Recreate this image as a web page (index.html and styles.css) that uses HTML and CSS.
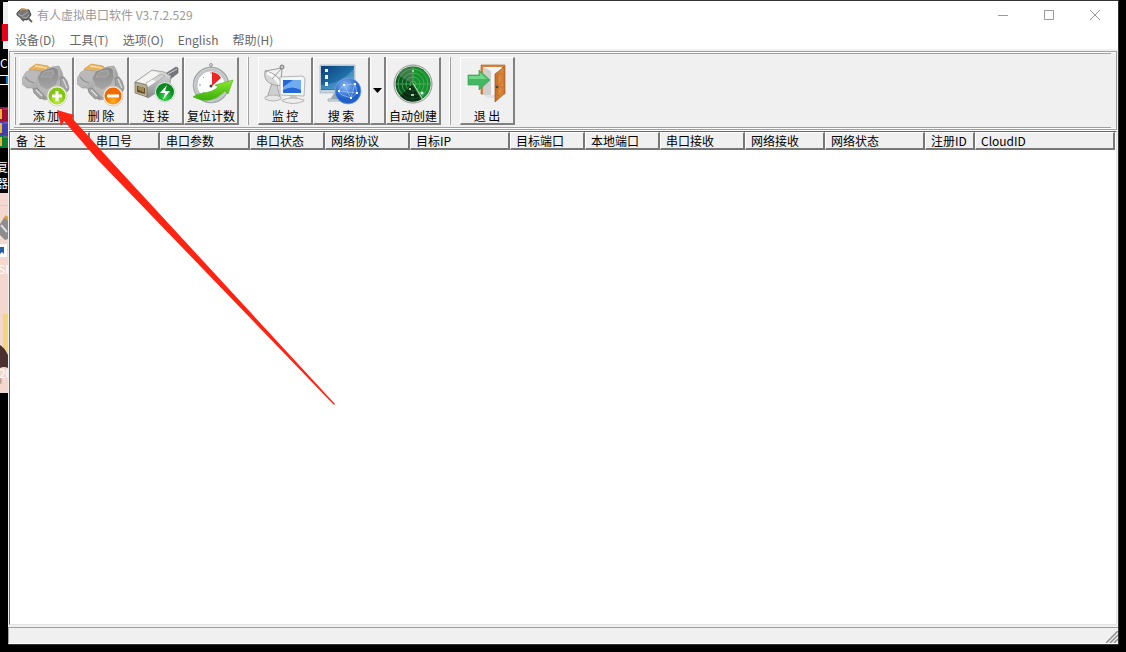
FILE: index.html
```html
<!DOCTYPE html>
<html lang="zh-CN">
<head>
<meta charset="utf-8">
<title>有人虚拟串口软件 V3.7.2.529</title>
<link rel="stylesheet" href="styles.css">
</head>
<body>
<svg class="defs" aria-hidden="true">
  <defs>
    <linearGradient id="metal" x1="0" y1="0" x2="1" y2="1"><stop offset="0" stop-color="#c4c4c4"/><stop offset=".5" stop-color="#adadad"/><stop offset="1" stop-color="#8e8e8e"/></linearGradient>
    <linearGradient id="hood" x1="0" y1="0" x2="0" y2="1"><stop offset="0" stop-color="#868686"/><stop offset="1" stop-color="#a8a8a8"/></linearGradient>
    <linearGradient id="plug" x1="0" y1="0" x2="0" y2="1"><stop offset="0" stop-color="#e4e4e2"/><stop offset="1" stop-color="#85878a"/></linearGradient>
    <linearGradient id="leaf" x1="0" y1="0" x2="0" y2="1"><stop offset="0" stop-color="#8bea2d"/><stop offset="1" stop-color="#39ad0b"/></linearGradient>
    <linearGradient id="screen" x1="0" y1="0" x2="1" y2="1"><stop offset="0" stop-color="#0c3f78"/><stop offset=".6" stop-color="#2173ae"/><stop offset="1" stop-color="#6fc0df"/></linearGradient>
    <linearGradient id="wood" x1="0" y1="0" x2="1" y2="0"><stop offset="0" stop-color="#c96c22"/><stop offset="1" stop-color="#e58f43"/></linearGradient>
    <radialGradient id="lime" cx=".5" cy=".8"><stop offset="0" stop-color="#c4ee3a"/><stop offset="1" stop-color="#84c414"/></radialGradient>
    <radialGradient id="orange" cx=".5" cy=".8"><stop offset="0" stop-color="#ffb020"/><stop offset="1" stop-color="#f06a00"/></radialGradient>
    <radialGradient id="green" cx=".5" cy=".8"><stop offset="0" stop-color="#35dc4a"/><stop offset="1" stop-color="#078a20"/></radialGradient>
    <radialGradient id="globe" cx=".4" cy=".3"><stop offset="0" stop-color="#8dbcf2"/><stop offset="1" stop-color="#2160c8"/></radialGradient>
    <symbol id="serial" viewBox="0 0 48 40">
      <path d="M7 8 14 3l12 2 3 3-8 3-13 1z" fill="#eeb052" stroke="#cc9348" stroke-width=".6"/>
      <path d="m13 5 12 2" stroke="#ffe0a6" stroke-width="1.500"/>
      <path d="M1 16 4 11l5-2 12 1 9-4 7-1 3 6 2 8 2 5-7 8-9 6-6 1-5-4-7-8-5 0-6-5z" fill="url(#metal)" stroke="#9a9a9a" stroke-width=".6"/>
      <path d="m3 14 5-3 9 1-4 10-5 3-5-3z" fill="#b9b9b9"/>
      <path d="m3 16 4 4 5 2" stroke="#8e8e8e" stroke-width="1.200" fill="none"/>
      <path d="m15 17 4-7 12-4 5 2 1 9-3 7-9 5-7-4z" fill="url(#hood)" stroke="#bebebe" stroke-width=".7"/>
      <path d="m19 16 3-5 9-2 1 4-3 3z" fill="#9b9b9b" stroke="#bbb" stroke-width=".6"/>
      <path d="m16 24 9 5 9-5 4-6 1 7-6 7-8 4-6-4z" fill="#b8b8b8"/>
      <path d="m38 17 4-1 3 4 2 7-1 3-4 1-3-5z" fill="#a2a2a2" stroke="#808080" stroke-width=".6"/>
      <path d="m41 18 4 9" stroke="#dedede" stroke-width="1.200"/>
      <path d="m11 28 4-1 7 7v3l-4 1-6-6z" fill="#a2a2a2" stroke="#808080" stroke-width=".6"/>
      <path d="m14 29 6 6" stroke="#dedede" stroke-width="1.200"/>
    </symbol>
  </defs>
</svg>
<div class="screen">
  <svg class="desktop" width="8" height="652" viewBox="0 0 8 652" aria-hidden="true">
    <path d="M3 2h5v47H3z" fill="#eee"/><path d="M2 24h6v17H2z" fill="#e90019"/>
    <text x="0" y="68" class="desk-text">C</text>
    <path d="M0 75.500h8M0 84.500h8" stroke="#fff"/><path d="M6 76h2v8H6z" fill="#0878d8"/>
    <path d="M0 107h8v14H0z" fill="#a01035"/><path d="M0 121h8v14H0z" fill="#4040ae"/><path d="M0 135h8v13H0z" fill="#107b35"/>
    <path d="M0 109h2v10H0zm0 14h2v10H0zm0 14h2v9H0z" fill="#e7b735"/><path d="M3 109h5M3 123h5M3 137h5" stroke="#e28aaf" stroke-opacity=".5"/>
    <text x="-4" y="172" class="desk-text">复</text><text x="-4" y="188" class="desk-text">器</text>
    <path d="M0 193h8v200H0z" fill="#f4d8cf"/><path d="M0 205.500h8" stroke="#e8c8bf"/>
    <path d="m3 219 3-4 2 2v5H3z" fill="#e69b28"/><path d="m0 224 4-6 4 3v18l-3 1-5-5z" fill="#8d8d8d"/><path d="m1 225 6 7" stroke="#ddd" stroke-width="2"/>
    <path d="M0 244h7v13H0z" fill="#fff"/><path d="M0 247h4v7l-2-2-2 2z" fill="#2861a3"/>
    <text x="-2" y="274" class="desk-text">SF</text>
    <path d="M3 314h5v40l-5-3z" fill="#f5d67a"/><path d="M0 345q4 2 8 10v13q-4-2-8 0z" fill="#4b302f"/>
    <path d="M0 377q3 3 1 7H0z" fill="#bda49f"/>
    <text x="-1" y="378" class="desk-text">20</text>
  </svg>

  <main class="window">
    <header class="titlebar">
      <svg class="app-icon" width="17" height="15" viewBox="0 0 17 15" aria-hidden="true"><path d="m1 5 4-4 8 1 2 5-4 5-5-1-5-4z" fill="#777" stroke="#444"/><path d="m4 2 3-1 5 1" stroke="#d9902c" stroke-width="1.500" fill="none"/><path d="m2 6 4 2 6-4M6 9l4 1 3-3" stroke="#aaa" fill="none"/><path d="m12 10 4 4M5 10l3 3" stroke="#666" stroke-width="2"/></svg>
      <h1 class="title">有人虚拟串口软件 V3.7.2.529</h1>
      <div class="controls">
        <button class="control" aria-label="最小化"><svg width="10" height="10"><path d="M0 5.500h10"/></svg></button>
        <button class="control" aria-label="最大化"><svg width="10" height="10"><path d="M.5.5h9v9h-9z"/></svg></button>
        <button class="control" aria-label="关闭"><svg width="10" height="10"><path d="m0 0 10 10m0-10L0 10"/></svg></button>
      </div>
    </header>
    <nav class="menu">
      <button>设备(D)</button><button>工具(T)</button><button>选项(O)</button><button>English</button><button>帮助(H)</button>
    </nav>

    <section class="coolbar">
      <div class="toolbar">
        <span class="grip"></span>
        <div class="group">
          <button class="tool">
            <svg class="icon" viewBox="0 0 48 48"><use href="#serial" width="48" height="40"/><circle cx="35" cy="35" r="10" fill="#f2f2e8" stroke="#c9c9b8" stroke-width=".7"/><circle cx="35" cy="35" r="8.500" fill="url(#lime)"/><path d="M35 30v10m-5-5h10" stroke="#fff" stroke-width="3"/></svg>
            <span>添 加</span>
          </button>
          <button class="tool">
            <svg class="icon" viewBox="0 0 48 48"><use href="#serial" width="48" height="40"/><circle cx="36" cy="35" r="10" fill="#f5eee7" stroke="#cbb" stroke-width=".7"/><circle cx="36" cy="35" r="8.500" fill="url(#orange)"/><path d="M30 35h12" stroke="#fff" stroke-width="3"/></svg>
            <span>删 除</span>
          </button>
          <button class="tool">
            <svg class="icon" viewBox="0 0 48 48"><path d="m33 13 11-7 2 1v5l-9 7z" fill="#73777a" stroke="#666" stroke-width=".6"/><path d="m36 13 9-5" stroke="#d5d8d8"/><path d="M3 21 20 9l12 2 7 4-1 8-22 14-4-3z" fill="url(#plug)" stroke="#8b8b8b" stroke-width=".7"/><path d="M4 21 20 10l8 2-13 11z" fill="#f4f4f2"/><path d="m14 22 15-9 4 2-14 10z" fill="#d2d4d3" stroke="#9b9d9e" stroke-width=".6"/><path d="m14 23 6-4 4 1-8 6z" fill="#fafafa"/><path d="m3 21 12 3v12L3 32z" fill="#b8ae94" stroke="#77705c" stroke-width=".7"/><path d="m5 25 8 2v6l-8-2z" fill="#5f5130"/><path d="M7 26v3m2-3v4m2-3v4" stroke="#e1c070"/><circle cx="33" cy="31" r="10" fill="#eef5ee" stroke="#bbc8bb" stroke-width=".7"/><circle cx="33" cy="31" r="9" fill="url(#green)"/><path d="m35 24-7 8h5l-2 7 7-9h-5z" fill="#fff"/></svg>
            <span>连 接</span>
          </button>
          <button class="tool">
            <svg class="icon" viewBox="0 0 48 48"><circle cx="24" cy="4" r="1.500" fill="#ddd" stroke="#999"/><path d="M24 5v3" stroke="#999" stroke-width="2"/><circle cx="24" cy="24" r="17.500" fill="#f8f8f8" stroke="#a4a7a9" stroke-width="1.500"/><circle cx="24" cy="24" r="15" fill="#fff" stroke="#c2c5c8" stroke-width="3"/><path d="M24 11v2M12 24h2M16 16l1 1M16 32l1-1" stroke="#999"/><path d="M25 11q7 1 9 6l-9 8z" fill="#ed2724"/><circle cx="24" cy="25" r="1.500" fill="#444"/><path d="M6 36q3-3 10-4 10-1 15-6l-3-2 18-5-5 14-3-3Q24 45 6 36z" fill="url(#leaf)" stroke="#4db51c" stroke-width=".6"/></svg>
            <span>复位计数</span>
          </button>
        </div>
        <span class="grip spaced"></span>
        <div class="group">
          <button class="tool">
            <svg class="icon" viewBox="0 0 48 48"><path d="m11 22-5 15h13l-3-13" fill="#cfcfcf" stroke="#a5a5a5"/><path d="M4 36q8-4 16 0v2q-8 4-16 0z" fill="#e6e6e6" stroke="#b5b5b5"/><path d="M4 10Q1 25 23 25 17 12 4 10z" fill="#d6d6d6" stroke="#a4a4a4"/><path d="M6 12q8 3 13 11" stroke="#f9f9f9" stroke-width="3" fill="none"/><path d="m11 18 10-11M4 10l17-3-1 15" stroke="#999" fill="none"/><circle cx="21" cy="6" r="2" fill="#c8c8c8" stroke="#777"/><path d="m19 16 23-1 2 3-1 17-24-1z" fill="#f6f6f6" stroke="#b2b5b9"/><path d="M22 19h18v13H22z" fill="#2467d5"/><path d="m22 26 10-7h8v10q-9-5-18 0z" fill="#71acf3"/><path d="M29 35h7v4h-7z" fill="#c6c6c6"/><path d="M21 39q11-4 22 0v1q-11 5-22 0z" fill="#eee" stroke="#b5b5b5"/></svg>
            <span>监 控</span>
          </button>
          <div class="split">
            <button class="tool wide">
              <svg class="icon" viewBox="0 0 48 48"><path d="M17 32h10l2 7H13z" fill="#9ba8b1"/><path d="M11 38h18v2H11z" fill="#dce4e9" stroke="#8c9aa3" stroke-width=".7"/><path d="M3 4h35v28H3z" fill="#bfd3df" stroke="#a0b6c4" stroke-width=".7"/><path d="M4 5h33v24H4z" fill="url(#screen)"/><path d="M4 24Q25 23 37 7v12Q23 30 4 28z" fill="#8ac9e5" fill-opacity=".3"/><path d="M8 8h3v3H8zm0 6h3v4H8zm0 7h3v4H8z" fill="#eaf4fb"/><circle cx="31" cy="30" r="13" fill="url(#globe)" stroke="#7ba5dc" stroke-width=".7"/><path d="m21 30 6-6 11-1 2 9-6 5-9-3zM27 24l7 13M21 30l19 2M38 23l-4 14" stroke="#aacdf7" fill="none" stroke-width=".6"/><path d="M26 24h2m9-1h2m-6 14h2m-14-7h2m16 2h2" stroke="#fff" stroke-width="2"/></svg>
              <span>搜 索</span>
            </button>
            <button class="dropdown" aria-label="更多搜索"><svg width="9" height="5"><path d="M0 0h9L4.500 5z"/></svg></button>
          </div>
          <button class="tool">
            <svg class="icon" viewBox="0 0 48 48"><circle cx="24" cy="23" r="19" fill="#e4e8e4" stroke="#8a918b"/><circle cx="24" cy="23" r="17.500" fill="#0b5a20"/><path d="M24 23V6a17 17 0 0 1 10 31z" fill="#14932c"/><path d="M24 23 9 14A17 17 0 0 1 24 6z" fill="#3e7a4a"/><g fill="none" stroke="#5fb56b" stroke-width=".7"><circle cx="24" cy="23" r="15"/><circle cx="24" cy="23" r="11"/><circle cx="24" cy="23" r="7"/><circle cx="24" cy="23" r="3"/><path d="M24 6v34M7 23h34"/></g><path d="m24 23 9 15" stroke="#b9ffb9" stroke-width="1.500"/><path d="m24 23 9 15a17 17 0 0 1-22-3z" fill="#04160a" fill-opacity=".65"/><circle cx="33" cy="32" r="1.500" fill="#dffcff"/><path d="M23 10h2m-5 18h2m0 6h3" stroke="#a8c8a8" stroke-width="2"/></svg>
            <span>自动创建</span>
          </button>
        </div>
        <span class="grip spaced"></span>
        <div class="group">
          <button class="tool">
            <svg class="icon" viewBox="0 0 48 48"><path d="M18 4h24v29H18z" fill="#d98338" stroke="#b06a2c" stroke-width=".7"/><path d="M20 6h19v28H20z" fill="#f4f4f4"/><path d="m20 6 8 4v24h-8z" fill="#cfcfcf"/><path d="m22 34h12v4l-12-2z" fill="#dfe2e6"/><path d="m32 13 9-7v27l-9 8z" fill="url(#wood)" stroke="#9f581d" stroke-width=".7"/><path d="m35 15 4-3v9l-4 3zm0 13 4-3v7l-4 3z" fill="#de8a3e" stroke="#b86a28" stroke-width=".6"/><circle cx="34" cy="26" r="1.300" fill="#444"/><path d="M5 14h11V9l11 10-11 10v-5H5z" fill="#43b761" stroke="#3fa35a" stroke-width=".7"/><path d="M6 15h11v-3l7 6H6z" fill="#73d78a"/></svg>
            <span>退 出</span>
          </button>
        </div>
      </div>
    </section>

    <section class="list">
      <table class="ports">
        <colgroup><col class="w80"><col class="w70"><col class="w90"><col class="w75"><col class="w85"><col class="w100"><col class="w75"><col class="w75"><col class="w85"><col class="w80"><col class="w100"><col class="w50"><col></colgroup>
        <thead><tr><th>备&nbsp; 注</th><th>串口号</th><th>串口参数</th><th>串口状态</th><th>网络协议</th><th>目标IP</th><th>目标端口</th><th>本地端口</th><th>串口接收</th><th>网络接收</th><th>网络状态</th><th>注册ID</th><th>CloudID</th></tr></thead>
        <tbody></tbody>
      </table>
    </section>
    <footer class="status"><svg width="12" height="12" aria-hidden="true"><path d="M0 12 12 0M4 12l8-8M8 12l4-4" stroke="#8c8c8c" stroke-width="1.500"/></svg></footer>
  </main>
</div>
<svg class="arrow" width="280" height="296" viewBox="0 0 280 296" aria-hidden="true"><path d="m0 0 17 5-2 3 37 41 226 245-1 1L40 49 7 11l-3 5z" fill="#ff2314"/></svg>
</body>
</html>
```
FILE: styles.css
```css
* { box-sizing: border-box; }
body {
  margin: 0;
  background: #000;
  color: #000;
  font: 12px/16px "Noto Sans CJK SC", sans-serif;
}
button {
  margin: 0;
  padding: 0;
  border: 0;
  background: none;
  color: inherit;
  font: inherit;
}
svg { display: block; flex: none; }
.defs { position: absolute; width: 0; height: 0; }
.screen { display: flex; height: 100vh; overflow: hidden; }
.desk-text { fill: #fff; font-size: 12px; }

.window {
  flex: 1;
  display: flex;
  flex-direction: column;
  min-width: 0;
  margin: 0 7px 7px 0;
  border: 1px solid #333;
  border-left: 0;
  background: #f0f0f0;
}
.titlebar {
  display: flex;
  align-items: center;
  height: 28px;
  padding-left: 8px;
  background: #fff;
  color: #999;
}
.title { margin: 0 0 0 4px; font-size: 12px; font-weight: 400; }
.controls { display: flex; align-self: stretch; margin-left: auto; }
.control { display: grid; place-items: center; width: 46px; }
.control path { fill: none; stroke: #999; }
.menu {
  display: flex;
  gap: 14px;
  height: 20px;
  padding-left: 7px;
  background: #fff;
  color: #666;
}
.menu button { height: 20px; padding-top: 2px; }

.coolbar {
  padding: 1px;
  margin: 2px 1px 0 1px;
  border: 1px solid #a0a0a0;
  box-shadow: inset 0 1px #fff, inset 0 -1px #fff, 0 1px #fff;
}
.toolbar {
  display: flex;
  height: 75px;
  margin: 0 4px 0 3px;
  padding-top: 3px;
  border-top: 1px solid #a0a0a0;
  border-bottom: 1px solid #a0a0a0;
}
.grip {
  width: 2px;
  height: 68px;
  border-left: 1px solid #fff;
  border-right: 1px solid #a0a0a0;
}
.grip.spaced { margin-left: 8px; margin-right: 6px; }
.group { display: flex; margin-left: 3px; }
.tool {
  display: flex;
  flex-direction: column;
  align-items: center;
  width: 55px;
  height: 68px;
  padding-top: 3px;
  border: 1px solid #fff;
  border-right: 2px solid #808080;
  border-bottom: 2px solid #808080;
  white-space: nowrap;
}
.tool span { line-height: 14px; }
.tool.wide { width: 57px; }
.icon { width: 48px; height: 48px; }
.split { display: flex; }
.dropdown {
  display: grid;
  place-items: center;
  width: 16px;
  height: 68px;
  border-left: 1px solid #fff;
  border-right: 2px solid #808080;
  border-bottom: 2px solid #808080;
}

.list {
  flex: 1;
  margin: 1px 1px 0 1px;
  border: 1px solid #696969;
  border-right-color: #e3e3e3;
  border-bottom-color: #e3e3e3;
  background: #fff;
}
.ports { width: calc(100% - 1px); table-layout: fixed; border-collapse: separate; border-spacing: 0; }
.ports th {
  height: 18px;
  padding: 0 0 0 5px;
  border: 1px solid #fff;
  border-right: 2px solid #777;
  border-bottom: 2px solid #777;
  background: #f0f0f0;
  font-weight: 400;
  line-height: 14px;
  text-align: left;
  white-space: nowrap;
}
.w50 { width: 50px; }
.w70 { width: 70px; }
.w75 { width: 75px; }
.w80 { width: 80px; }
.w85 { width: 85px; }
.w90 { width: 90px; }
.w100 { width: 100px; }
.status {
  display: flex;
  justify-content: flex-end;
  align-items: flex-end;
  height: 17px;
  margin-top: 2px;
  border-top: 1px solid #a0a0a0;
  border-left: 1px solid #a0a0a0;
  border-bottom: 1px solid #fff;
}
.arrow { position: absolute; left: 57px; top: 110px; pointer-events: none; }
```
